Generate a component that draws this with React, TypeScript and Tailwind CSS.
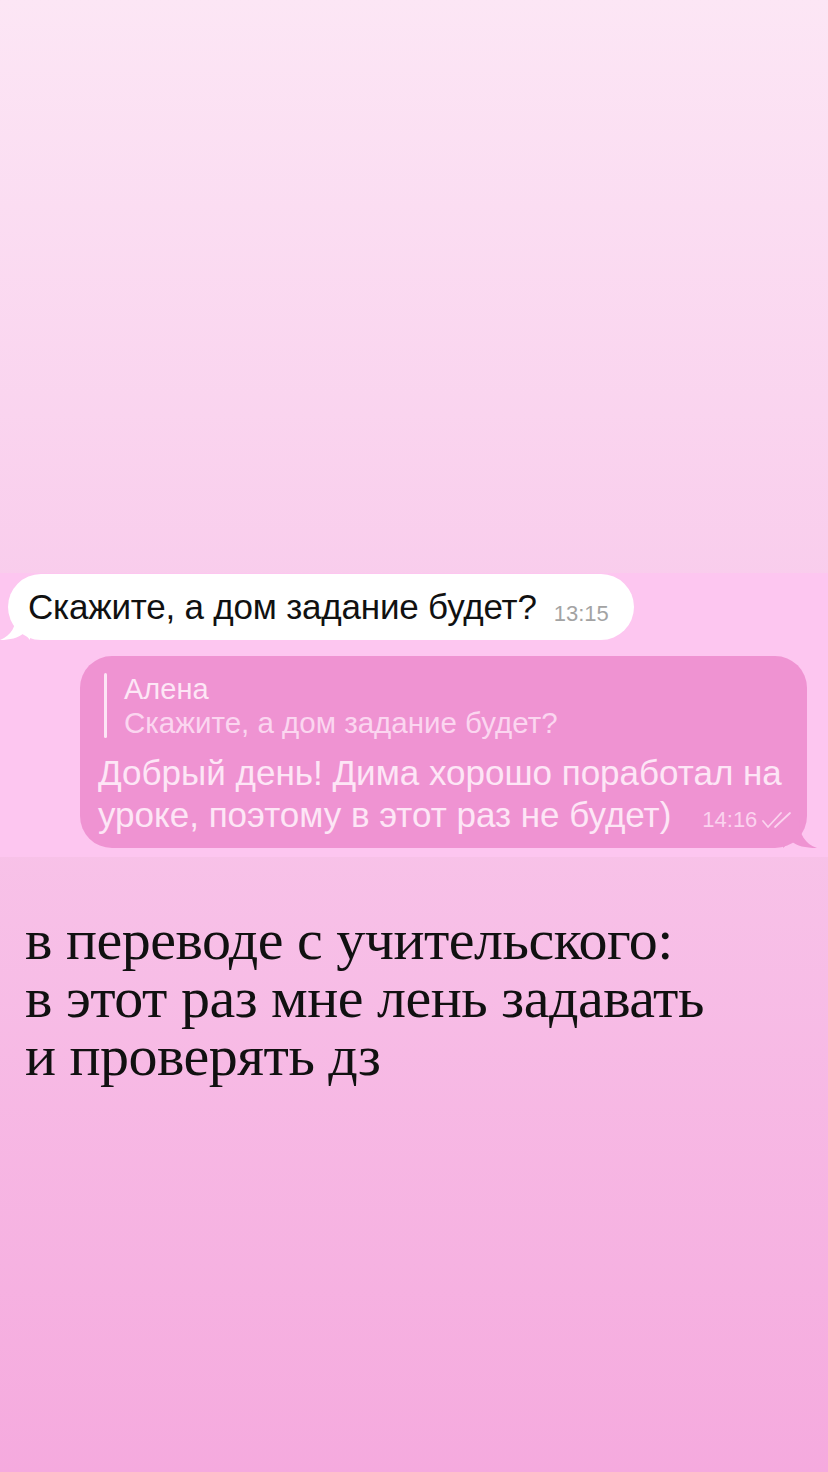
import React from 'react';

const sans = { fontFamily: '"Liberation Sans", Arial, sans-serif' };
const serif = { fontFamily: '"Liberation Serif", "Times New Roman", serif' };

const DoubleCheck = () => (
  <svg width="34" height="20" viewBox="0 0 34 20" fill="none" stroke="#fbd3ef" strokeWidth="1.8" strokeLinecap="round" strokeLinejoin="round">
    <path d="M2 11 L7 17 L20 3" />
    <path d="M14 17 L29 3" />
  </svg>
);

const IncomingBubble = () => (
  <div className="relative ml-[8px] w-[626px] h-[66px] bg-white rounded-[33px] flex items-center pl-[20px]">
    <svg className="absolute left-[-8px] bottom-0" width="30" height="26" viewBox="0 0 30 26">
      <path d="M16 0 C16 12 12 21 0 26 C10 26 18 24 24 19 L30 26 L30 0 Z" fill="#ffffff" />
    </svg>
    <span className="relative text-[35px] leading-[40px] text-[#111] tracking-[-0.2px]" style={sans}>Скажите, а дом задание будет?</span>
    <span className="relative ml-[17px] mt-[12px] text-[22px] text-[#a3a3a3]" style={sans}>13:15</span>
  </div>
);

const OutgoingBubble = () => (
  <div className="relative ml-[80px] w-[727px] h-[192px] bg-[#ef93d2] rounded-[32px] pl-[18px] pt-[17px]">
    <svg className="absolute right-[-10px] bottom-0" width="34" height="28" viewBox="0 0 34 28">
      <path d="M16 0 C16 14 22 24 34 28 C22 28 14 26 8 21 L0 28 L0 0 Z" fill="#ef93d2" />
    </svg>
    <div className="relative flex ml-[6px]">
      <div className="w-[3px] h-[65px] bg-[#fde6f6] rounded-full" />
      <div className="ml-[17px] flex flex-col" style={sans}>
        <span className="text-[29px] leading-[32px] text-[#fde7f6]">Алена</span>
        <span className="text-[29.5px] leading-[36px] text-[#fbd6f0]">Скажите, а дом задание будет?</span>
      </div>
    </div>
    <div className="relative mt-[11px] text-[35px] leading-[42px] text-[#fde6f6]" style={sans}>
      <div>Добрый день! Дима хорошо поработал на</div>
      <div className="flex items-end">
        <span>уроке, поэтому в этот раз не будет)</span>
        <span className="ml-[31px] mb-[1px] text-[22px] leading-[30px] text-[#fbd3ef]">14:16</span>
        <span className="mb-[6px] ml-[4px]"><DoubleCheck /></span>
      </div>
    </div>
  </div>
);

export default function App() {
  return (
    <div className="w-[828px] h-[1472px] flex flex-col bg-gradient-to-b from-[#fce6f5] via-[#f8c6ea] to-[#f5aade] overflow-hidden">
      <div className="h-[573px] shrink-0" />
      <div className="h-[284px] shrink-0 bg-[#fdc6f0] pt-[1px] flex flex-col gap-[16px]">
        <IncomingBubble />
        <OutgoingBubble />
      </div>
      <div className="pl-[25px] pt-[54px] text-[58px] leading-[58px] text-[#111] tracking-[-0.5px]" style={serif}>
        <div>в переводе с учительского:</div>
        <div>в этот раз мне лень задавать</div>
        <div>и проверять дз</div>
      </div>
    </div>
  );
}
